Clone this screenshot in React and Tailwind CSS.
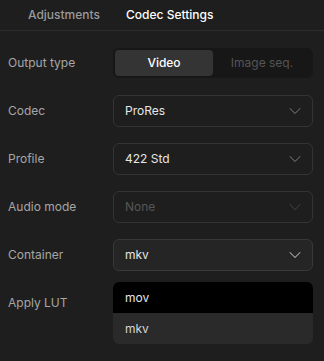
import { ChevronDown } from "lucide-react";

const font = { fontFamily: "Inter, 'Noto Sans', sans-serif" };

function Select({ value, disabled, hover, children }) {
  return (
    <div className="relative w-[200px] h-8">
      <div
        className={`flex items-center justify-between h-8 pl-[11px] pr-[7px] rounded-md border ${
          hover ? "bg-[#252525] border-[#383838]" : "bg-[#1e1e1e] border-[#343434]"
        }`}
      >
        <span className={`text-xs ${disabled ? "text-[#565656]" : "text-[#e6e6e6]"}`}>{value}</span>
        <ChevronDown
          size={20}
          strokeWidth={1.25}
          className={disabled ? "text-[#3e3e3e]" : hover ? "text-[#b0b0b0]" : "text-[#6a6a6a]"}
        />
      </div>
      {children}
    </div>
  );
}

function Row({ label, children }) {
  return (
    <div className="flex items-center h-8">
      <div className="w-[105px] text-xs text-[#a6a6a6]">{label}</div>
      {children}
    </div>
  );
}

export default function App() {
  return (
    <div className="w-[324px] h-[361px] bg-[#1e1e1e] overflow-hidden" style={font}>
      {/* tabs */}
      <div className="flex gap-[2px] h-[31px] pl-4 border-b border-[#2c2c2c]">
        <button className="px-3 text-xs font-medium text-[#9a9a9a]">Adjustments</button>
        <button className="px-3 text-xs font-medium text-white">Codec Settings</button>
      </div>

      <div className="flex flex-col gap-4 pt-4 pl-2">
        <Row label="Output type">
          <div className="flex w-[200px] h-[30px] p-[2px] rounded-md bg-[#171717]">
            <div className="flex-1 flex items-center justify-center rounded bg-[#343434] text-xs font-medium text-white">
              Video
            </div>
            <div className="flex-1 flex items-center justify-center text-xs text-[#555555]">Image seq.</div>
          </div>
        </Row>
        <Row label="Codec">
          <Select value="ProRes" />
        </Row>
        <Row label="Profile">
          <Select value="422 Std" />
        </Row>
        <Row label="Audio mode">
          <Select value="None" disabled />
        </Row>
        <Row label="Container">
          <Select value="mkv" hover>
            <div className="absolute left-0 top-[43px] w-[200px] rounded-md overflow-hidden bg-[#2a2a2a] z-10">
              <div className="h-[31px] flex items-center px-3 bg-black text-xs text-[#e6e6e6]">mov</div>
              <div className="h-[31px] flex items-center px-3 text-xs text-[#d6d6d6]">mkv</div>
            </div>
          </Select>
        </Row>
        <Row label="Apply LUT" />
      </div>
    </div>
  );
}
